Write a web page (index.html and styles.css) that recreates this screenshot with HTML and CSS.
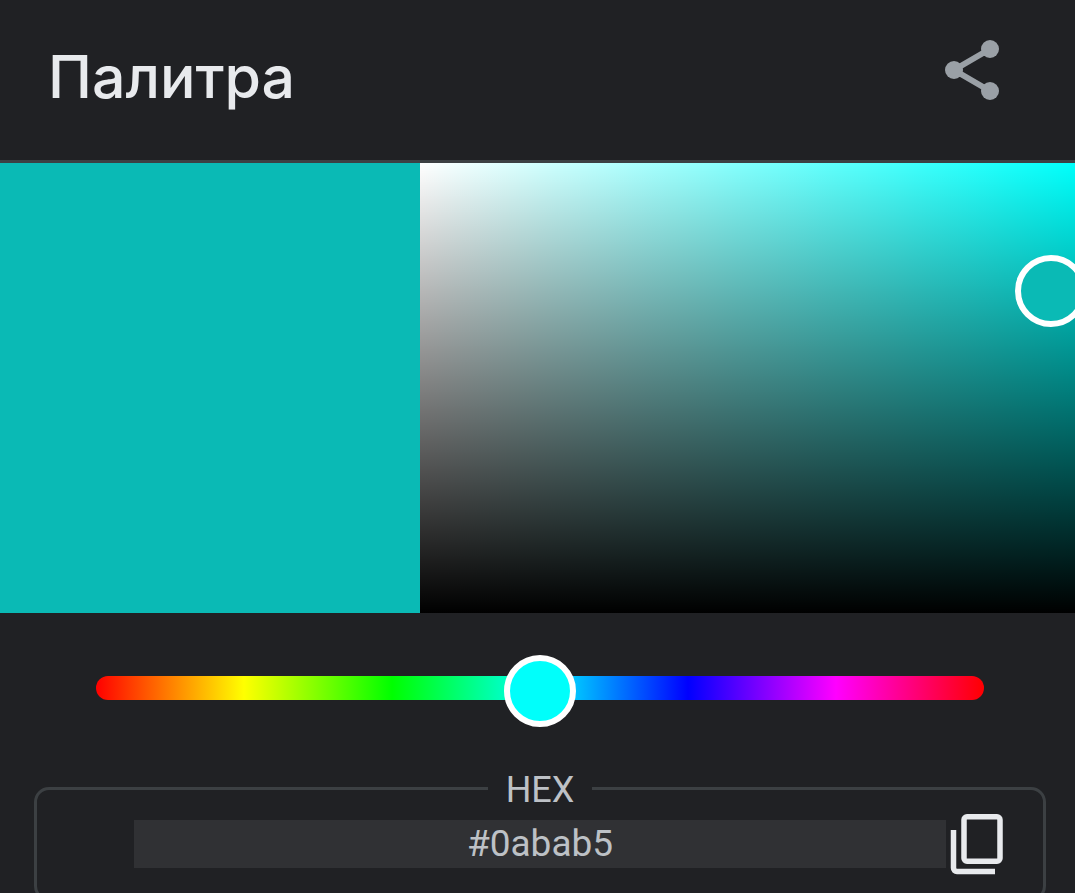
FILE: index.html
```html
<!DOCTYPE html>
<html lang="ru">
<head>
<meta charset="utf-8">
<meta name="viewport" content="width=device-width, initial-scale=1">
<title>Палитра</title>
<link rel="stylesheet" href="styles.css">
</head>
<body>
<main class="palette">
  <header class="header">
    <h1 class="title">Палитра</h1>
    <button class="icon-button share" type="button" aria-label="Поделиться">
      <svg width="54" height="60" viewBox="0 0 54 60" aria-hidden="true">
        <path d="M45 9 9 30l36 21" fill="none" stroke="currentColor" stroke-width="6"/>
        <g fill="currentColor"><circle cx="45" cy="9" r="9"/><circle cx="9" cy="30" r="9"/><circle cx="45" cy="51" r="9"/></g>
      </svg>
    </button>
  </header>
  <section class="picker">
    <div class="swatch"></div>
    <div class="surface">
      <button class="knob" type="button" aria-label="Насыщенность и яркость"></button>
    </div>
  </section>
  <div class="hue">
    <input class="hue-slider" type="range" min="0" max="360" value="180" aria-label="Оттенок">
  </div>
  <fieldset class="hex">
    <legend class="hex-label">HEX</legend>
    <div class="hex-row">
      <input class="hex-input" type="text" value="#0abab5" aria-label="HEX">
      <button class="icon-button copy" type="button" aria-label="Копировать">
        <svg width="54" height="62" viewBox="0 0 54 62" fill="none" stroke="currentColor" stroke-width="5.5" aria-hidden="true">
          <rect x="14" y="3.75" width="36" height="44.5" rx="3"/>
          <path d="M3.5 17v38a3.5 3.5 0 0 0 3.5 3.5h38"/>
        </svg>
      </button>
    </div>
  </fieldset>
</main>
</body>
</html>
```
FILE: styles.css
```css
* {
  box-sizing: border-box;
}

body {
  margin: 0;
  height: 100vh;
  overflow: hidden;
  background: #202124;
  color: #bdc1c6;
  font-family: Roboto, "Liberation Sans", sans-serif;
}

.header {
  display: flex;
  align-items: flex-start;
  justify-content: space-between;
  padding: 40px 76px 46px 48px;
  border-bottom: 3px solid #3c4043;
}

.title {
  margin: 0;
  color: #e8eaed;
  font-family: Inter, Roboto, sans-serif;
  font-size: 59px;
  font-weight: 500;
  line-height: 74px;
}

.icon-button {
  flex: none;
  padding: 0;
  border: 0;
  background: none;
  cursor: pointer;
}

.icon-button svg {
  display: block;
}

.share {
  color: #9aa0a6;
}

.picker {
  display: grid;
  grid-template-columns: 420px 1fr;
  height: 450px;
  overflow: hidden;
}

.swatch {
  background: #0abab5;
}

.surface {
  position: relative;
  background:
    linear-gradient(to top, #000, transparent),
    linear-gradient(to right, #fff, transparent),
    #00fffb;
}

.knob {
  position: absolute;
  right: -12px;
  top: 92px;
  width: 72px;
  height: 72px;
  padding: 0;
  border: 6px solid #fff;
  border-radius: 50%;
  background: #0abab5;
}

.hue {
  display: flex;
  padding: 39px 91px 0 96px;
}

.hue-slider {
  appearance: none;
  width: 100%;
  height: 72px;
  margin: 0;
  background: none;
}

.hue-slider::-webkit-slider-runnable-track {
  height: 24px;
  border-radius: 12px;
  background: linear-gradient(to right, #f00, #ff0, #0f0, #0ff, #00f, #f0f, #f00);
}

.hue-slider::-webkit-slider-thumb {
  appearance: none;
  width: 72px;
  height: 72px;
  margin-top: -21px;
  border: 6px solid #fff;
  border-radius: 50%;
  background: #00fffb;
}

.hex {
  min-width: 0;
  margin: 43px 29px 0 34px;
  padding: 3px 0 23px;
  border: 3px solid #3c4043;
  border-radius: 15px;
}

.hex-label {
  margin: 0 auto;
  padding: 3px 18px 0;
  font-size: 36px;
  line-height: 40px;
}

.hex-row {
  display: flex;
  align-items: flex-start;
  gap: 4px;
  padding: 0 39px 0 97px;
}

.hex-input {
  flex: 1;
  min-width: 0;
  height: 48px;
  margin-top: 7px;
  padding: 0;
  border: 0;
  background: #303134;
  color: inherit;
  font: 37px/48px Roboto, "Liberation Sans", sans-serif;
  text-align: center;
}

.copy {
  color: #e8eaed;
}
```
